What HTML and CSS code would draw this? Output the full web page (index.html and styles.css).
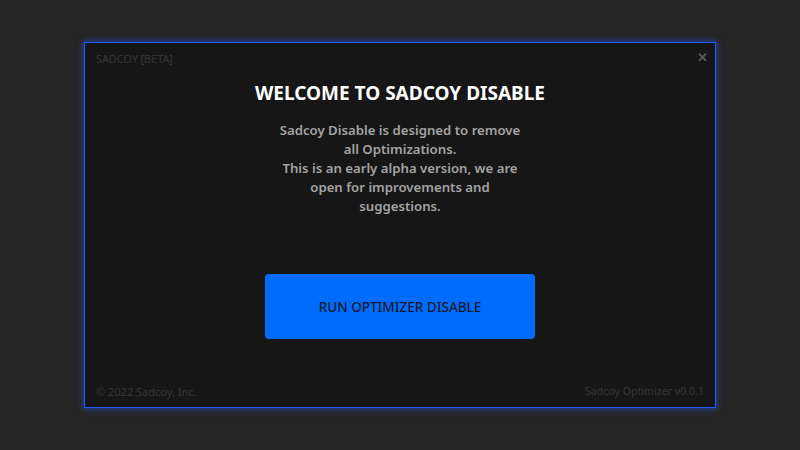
FILE: index.html
```html
<!DOCTYPE html>
<html>
<head>
<meta charset="utf-8">
<link rel="stylesheet" href="styles.css">
</head>
<body>
<div class="window">
  <div class="topbar">
    <span class="brand">SADCOY [BETA]</span>
    <span class="close">&#x2715;</span>
  </div>
  <div class="content">
    <h1 class="title">WELCOME TO SADCOY DISABLE</h1>
    <p class="desc">Sadcoy Disable is designed to remove<br>all Optimizations.<br>This is an early alpha version, we are<br>open for improvements and<br>suggestions.</p>
    <button class="run">RUN OPTIMIZER DISABLE</button>
  </div>
  <div class="footer">
    <span class="copy">© 2022 Sadcoy, Inc.</span>
    <span class="ver">Sadcoy Optimizer v0.0.1</span>
  </div>
</div>
</body>
</html>
```
FILE: styles.css
```css
html, body {
  margin: 0;
  padding: 0;
  height: 100%;
}
body {
  background: #262626;
  display: flex;
  align-items: center;
  justify-content: center;
  font-family: "Noto Sans", "Open Sans", sans-serif;
}
.window {
  width: 630px;
  height: 364px;
  background: #161616;
  border: 1px solid #1f5fff;
  box-shadow: 0 0 6px 1px rgba(40, 90, 255, 0.55);
  display: flex;
  flex-direction: column;
  box-sizing: content-box;
}
.topbar {
  display: flex;
  justify-content: space-between;
  align-items: center;
  padding: 5px 7px 0 11px;
  height: 18px;
}
.brand {
  font-size: 10.8px;
  color: #363636;
  margin-top: 3px;
}
.close {
  font-size: 13px;
  color: #5a5a5a;
  font-weight: bold;
}
.content {
  flex: 1;
  display: flex;
  flex-direction: column;
  align-items: center;
}
.title {
  margin: 15px 0 0 0;
  font-size: 19px;
  font-weight: 700;
  color: #ffffff;
  line-height: 24px;
}
.desc {
  margin: 16px 0 0 0;
  text-align: center;
  font-size: 13.2px;
  font-weight: 600;
  line-height: 19px;
  color: #a3a3a3;
}
.run {
  margin-top: 58px;
  width: 270px;
  height: 65px;
  border: none;
  border-radius: 4px;
  background: #006cff;
  color: #0f1a2e;
  font-family: inherit;
  font-size: 13.5px;
  font-weight: 500;
}
.footer {
  display: flex;
  justify-content: space-between;
  padding: 0 11px 8px 11px;
  font-size: 11px;
  color: #363636;
}
.ver {
  font-size: 10.6px;
}
```
